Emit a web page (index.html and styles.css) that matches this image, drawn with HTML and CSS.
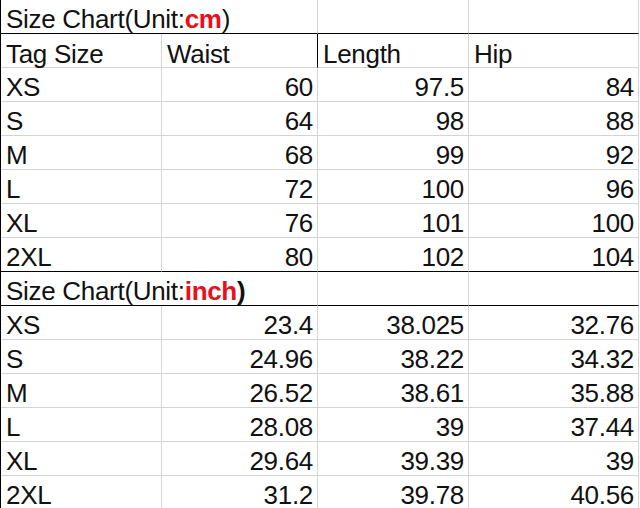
FILE: index.html
```html
<!DOCTYPE html>
<html>
<head>
<meta charset="utf-8">
<link rel="stylesheet" href="styles.css">
</head>
<body>
<div class="sheet">
  <div class="cell title span2 bb">Size Chart(Unit:<b class="red">cm</b>)</div>
  <div class="cell bb"></div>
  <div class="cell bb"></div>

  <div class="cell head">Tag Size</div>
  <div class="cell head br">Waist</div>
  <div class="cell head">Length</div>
  <div class="cell head">Hip</div>

  <div class="cell">XS</div><div class="cell num">60</div><div class="cell num">97.5</div><div class="cell num">84</div>
  <div class="cell">S</div><div class="cell num">64</div><div class="cell num">98</div><div class="cell num">88</div>
  <div class="cell">M</div><div class="cell num">68</div><div class="cell num">99</div><div class="cell num">92</div>
  <div class="cell">L</div><div class="cell num">72</div><div class="cell num">100</div><div class="cell num">96</div>
  <div class="cell">XL</div><div class="cell num">76</div><div class="cell num">101</div><div class="cell num">100</div>
  <div class="cell bb">2XL</div><div class="cell num bb">80</div><div class="cell num bb">102</div><div class="cell num bb">104</div>

  <div class="cell title span2 bb">Size Chart(Unit:<b class="red">inch</b><b>)</b></div>
  <div class="cell bb"></div>
  <div class="cell bb"></div>

  <div class="cell">XS</div><div class="cell num">23.4</div><div class="cell num">38.025</div><div class="cell num">32.76</div>
  <div class="cell">S</div><div class="cell num">24.96</div><div class="cell num">38.22</div><div class="cell num">34.32</div>
  <div class="cell">M</div><div class="cell num">26.52</div><div class="cell num">38.61</div><div class="cell num">35.88</div>
  <div class="cell">L</div><div class="cell num">28.08</div><div class="cell num">39</div><div class="cell num">37.44</div>
  <div class="cell">XL</div><div class="cell num">29.64</div><div class="cell num">39.39</div><div class="cell num">39</div>
  <div class="cell">2XL</div><div class="cell num">31.2</div><div class="cell num">39.78</div><div class="cell num">40.56</div>
</div>
</body>
</html>
```

FILE: styles.css
```css
html, body {
  margin: 0;
  padding: 0;
  background: #fff;
  overflow: hidden;
}
body {
  width: 640px;
  height: 508px;
  font-family: "Liberation Sans", Arial, sans-serif;
  font-size: 26px;
  letter-spacing: -0.3px;
  color: #111;
}
.sheet {
  display: grid;
  grid-template-columns: 161px 156px 151px 170px;
  grid-auto-rows: 34px;
  width: 638px;
  border-left: 1px solid #000;
  box-sizing: border-box;
}
.cell {
  box-sizing: border-box;
  border-right: 1px solid #d4d4d4;
  border-bottom: 1px solid #d4d4d4;
  padding: 5px 4px 0 5px;
  line-height: 28px;
  white-space: nowrap;
  overflow: visible;
}
.head { padding-top: 6px; }
.span2 { grid-column: span 2; }
.num { text-align: right; }
.bb { border-bottom-color: #000; }
.br { border-right-color: #000; }
.red { color: #e8101a; }
b { font-weight: bold; }
```
